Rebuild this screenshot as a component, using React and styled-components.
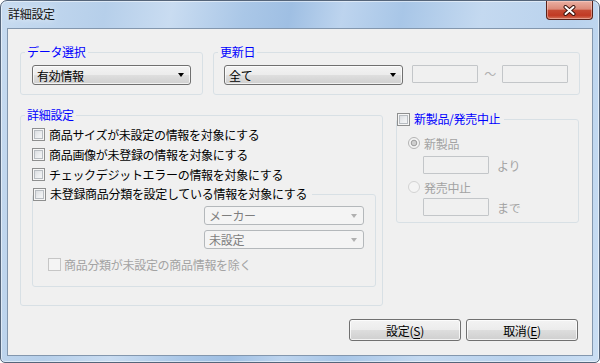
import React from "react";
import styled, { createGlobalStyle } from "styled-components";

// Win7 風「詳細設定」ダイアログ

const GlobalStyle = createGlobalStyle`
  html, body {
    margin: 0;
    padding: 0;
    background: #ffffff;
  }
  body {
    font-family: "Noto Sans CJK JP", "Liberation Sans", sans-serif;
    font-size: 12px;
  }
`;

const Window = styled.div`
  box-sizing: border-box;
  width: 600px;
  height: 363px;
  display: flex;
  flex-direction: column;
  border: 1px solid #55657a;
  border-radius: 7px 7px 5px 5px;
  overflow: hidden;
  background: linear-gradient(
    100deg,
    #c7dbf0 0%,
    #b6cfea 16%,
    #c9dcf1 26%,
    #aac7e7 37%,
    #9fbfe3 44%,
    #bdd4ee 52%,
    #a8c6e7 61%,
    #c4d9f0 73%,
    #b9d2ed 87%,
    #cadef3 100%
  );
  box-shadow: inset 0 0 0 1px rgba(255, 255, 255, 0.5);
`;

const TitleBar = styled.div`
  height: 27px;
  display: flex;
  align-items: flex-start;
  justify-content: space-between;
  padding-left: 7px;
`;

const Title = styled.div`
  line-height: 26px;
  color: #111;
  letter-spacing: -0.3px;
  text-shadow: 0 0 6px rgba(255, 255, 255, 0.9);
`;

const CloseButton = styled.div`
  box-sizing: border-box;
  width: 47px;
  height: 19px;
  margin-right: 6px;
  border: 1px solid #5a2219;
  border-top: none;
  border-radius: 0 0 4px 4px;
  display: flex;
  align-items: center;
  justify-content: center;
  background: linear-gradient(
    180deg,
    #eab0a3 0%,
    #dc8a79 45%,
    #c54a33 52%,
    #c13a24 80%,
    #d3735a 100%
  );
  box-shadow: inset 0 0 0 1px rgba(255, 220, 210, 0.45);
`;

const Client = styled.div`
  flex: 1;
  box-sizing: border-box;
  margin: 0 6px 6px 6px;
  border: 1px solid #8397ae;
  background: #f0f0f0;
  display: flex;
  flex-direction: column;
  padding: 15px 12px 14px 12px;
  letter-spacing: -0.3px;
  color: #000;
`;

const Row = styled.div`
  display: flex;
  align-items: flex-start;
  gap: ${(p) => p.$gap}px;
  margin-top: ${(p) => p.$top || 0}px;
`;

const Group = styled.fieldset`
  box-sizing: border-box;
  width: ${(p) => (p.$w ? `${p.$w}px` : "auto")};
  align-self: ${(p) => (p.$w ? "auto" : "stretch")};
  min-width: 0;
  margin: ${(p) => p.$top || 0}px 0 0 0;
  padding: 0;
  border: 1px solid #d8e0e5;
  border-radius: 3px;
`;

const Legend = styled.legend`
  margin-left: ${(p) => (p.$indent !== undefined ? p.$indent : 4)}px;
  padding: 0 ${(p) => (p.$pr !== undefined ? p.$pr : 2)}px 0 ${(p) => (p.$pl !== undefined ? p.$pl : 2)}px;
  height: ${(p) => p.$h || 16}px;
  line-height: ${(p) => p.$h || 16}px;
  color: ${(p) => p.$color || "#0000ff"};
`;

const LegendInner = styled.span`
  display: flex;
  align-items: center;
  height: 100%;
  gap: ${(p) => p.$gap || 4}px;
`;

const GroupBody = styled.div`
  display: flex;
  flex-direction: ${(p) => (p.$col ? "column" : "row")};
  align-items: flex-start;
  padding: ${(p) => p.$pad};
`;

const Combo = styled.div`
  box-sizing: border-box;
  width: ${(p) => p.$w}px;
  height: ${(p) => p.$h || 20}px;
  display: flex;
  align-items: center;
  justify-content: space-between;
  padding: 0 6px 0 4px;
  border-radius: 3px;
  border: 1px solid ${(p) => (p.$disabled ? "#b4b8bb" : "#707070")};
  color: ${(p) => (p.$disabled ? "#7e7e7e" : "#000")};
  background: ${(p) =>
    p.$disabled
      ? "#f4f4f4"
      : "linear-gradient(180deg, #f3f3f3 0%, #ececec 48%, #dedede 52%, #d0d0d0 100%)"};
  box-shadow: ${(p) => (p.$disabled ? "none" : "inset 0 0 0 1px rgba(255,255,255,0.7)")};
`;

const Arrow = styled.span`
  width: 0;
  height: 0;
  border-left: 3.5px solid transparent;
  border-right: 3.5px solid transparent;
  border-top: 4px solid ${(p) => (p.$disabled ? "#b0b0b0" : "#000")};
`;

const TextBox = styled.div`
  box-sizing: border-box;
  width: 66px;
  height: 18px;
  margin-left: ${(p) => p.$left || 0}px;
  border: 1px solid #c3c6c9;
  border-radius: 1px;
  background: #f0f0f0;
`;

const Tilde = styled.span`
  width: 24px;
  height: 18px;
  line-height: 18px;
  text-align: center;
  color: #b0b0b0;
`;

const CheckRow = styled.div`
  display: flex;
  align-items: center;
  height: 20px;
  gap: ${(p) => (p.$disabled ? 3 : 4)}px;
  margin-top: ${(p) => p.$top || 0}px;
  padding-left: ${(p) => p.$indent || 0}px;
  color: ${(p) => (p.$disabled ? "#a3a3a3" : "#000")};
`;

const Box = styled.span`
  box-sizing: border-box;
  flex: none;
  width: 13px;
  height: 13px;
  border: 1px solid ${(p) => (p.$disabled ? "#c6c6c6" : "#8e8f8f")};
  background: ${(p) =>
    p.$disabled ? "#f4f4f4" : "linear-gradient(135deg, #d3d6da 0%, #eceef0 55%, #fbfbfb 100%)"};
  box-shadow: ${(p) =>
    p.$disabled ? "none" : "inset 0 0 0 1px #f6f6f6, inset 0 0 0 2px #b7bcc1"};
`;

const RadioRow = styled.div`
  display: flex;
  align-items: center;
  height: 18px;
  gap: 4px;
  color: #a3a3a3;
  margin-top: ${(p) => p.$top || 0}px;
`;

const InputRow = styled.div`
  display: flex;
  align-items: center;
  gap: 8px;
  padding-left: 15px;
  color: #a3a3a3;
  margin-top: ${(p) => p.$top || 0}px;
`;

const ComboStack = styled.div`
  align-self: stretch;
  display: flex;
  flex-direction: column;
  align-items: flex-end;
  gap: 5px;
  padding: 2px 11px 0 0;
`;

const ButtonRow = styled.div`
  display: flex;
  justify-content: flex-end;
  gap: 5px;
  margin-top: 13px;
  padding-right: 2px;
`;

const Button = styled.button`
  box-sizing: border-box;
  width: 112px;
  height: 22px;
  padding: 0;
  border: 1px solid #707070;
  border-radius: 3px;
  font: inherit;
  letter-spacing: -0.3px;
  color: #000;
  background: linear-gradient(180deg, #f3f3f3 0%, #ececec 48%, #dddddd 52%, #cfcfcf 100%);
  box-shadow: inset 0 0 0 1px rgba(255, 255, 255, 0.75);
  u {
    text-underline-offset: 2px;
  }
`;

const RadioSvg = styled.svg`
  flex: none;
`;

const CloseGlyph = () => (
  <svg width="13" height="11" viewBox="0 0 13 11">
    <path d="M2.5 2 L10.5 9 M10.5 2 L2.5 9" stroke="#3b140e" strokeWidth="4" strokeLinecap="round" />
    <path d="M2.5 2 L10.5 9 M10.5 2 L2.5 9" stroke="#ffffff" strokeWidth="2" strokeLinecap="round" />
  </svg>
);

const Radio = ({ checked }) => (
  <RadioSvg width="12" height="12" viewBox="0 0 12 12">
    <circle cx="6" cy="6" r="5.5" fill="#f4f4f4" stroke={checked ? "#b3b3b3" : "#d2d2d2"} />
    {checked && <circle cx="6" cy="6" r="2.8" fill="#cfcfcf" stroke="#9c9c9c" strokeWidth="1" />}
  </RadioSvg>
);

const CheckItem = ({ label, disabled, indent, top }) => (
  <CheckRow $disabled={disabled} $indent={indent} $top={top}>
    <Box $disabled={disabled} />
    <span>{label}</span>
  </CheckRow>
);

const App = () => {
  const options = [
    "商品サイズが未設定の情報を対象にする",
    "商品画像が未登録の情報を対象にする",
    "チェックデジットエラーの情報を対象にする",
  ];

  return (
    <>
      <GlobalStyle />
      <Window>
        <TitleBar>
          <Title>詳細設定</Title>
          <CloseButton>
            <CloseGlyph />
          </CloseButton>
        </TitleBar>
        <Client>
          <Row $gap={10}>
            <Group $w={183}>
              <Legend>データ選択</Legend>
              <GroupBody $pad="5px 0 9px 11px">
                <Combo $w={159}>
                  <span>有効情報</span>
                  <Arrow />
                </Combo>
              </GroupBody>
            </Group>
            <Group $w={367}>
              <Legend>更新日</Legend>
              <GroupBody $pad="5px 0 9px 10px">
                <Combo $w={179}>
                  <span>全て</span>
                  <Arrow />
                </Combo>
                <TextBox $left={9} />
                <Tilde>〜</Tilde>
                <TextBox />
              </GroupBody>
            </Group>
          </Row>

          <Row $gap={13} $top={12}>
            <Group $w={363}>
              <Legend>詳細設定</Legend>
              <GroupBody $col $pad="1px 6px 18px 11px">
                {options.map((label) => (
                  <CheckItem key={label} label={label} />
                ))}
                <Group>
                  <Legend $indent={0} $pl={0} $pr={5} $h={20} $color="#000">
                    <LegendInner>
                      <Box />
                      <span>未登録商品分類を設定している情報を対象にする</span>
                    </LegendInner>
                  </Legend>
                  <GroupBody $col $pad="0 0 12px 0">
                    <ComboStack>
                      <Combo $w={160} $h={19} $disabled>
                        <span>メーカー</span>
                        <Arrow $disabled />
                      </Combo>
                      <Combo $w={160} $h={19} $disabled>
                        <span>未設定</span>
                        <Arrow $disabled />
                      </Combo>
                    </ComboStack>
                    <CheckItem label="商品分類が未設定の商品情報を除く" disabled indent={15} top={5} />
                  </GroupBody>
                </Group>
              </GroupBody>
            </Group>

            <Group $w={183} $top={4}>
              <Legend $indent={0} $pl={0} $pr={4}>
                <LegendInner>
                  <Box />
                  <span>新製品/発売中止</span>
                </LegendInner>
              </Legend>
              <GroupBody $col $pad="7px 0 6px 11px">
                <RadioRow>
                  <Radio checked />
                  <span>新製品</span>
                </RadioRow>
                <InputRow $top={4}>
                  <TextBox />
                  <span>より</span>
                </InputRow>
                <RadioRow $top={4}>
                  <Radio />
                  <span>発売中止</span>
                </RadioRow>
                <InputRow $top={2}>
                  <TextBox />
                  <span>まで</span>
                </InputRow>
              </GroupBody>
            </Group>
          </Row>

          <ButtonRow>
            <Button>
              設定(<u>S</u>)
            </Button>
            <Button>
              取消(<u>E</u>)
            </Button>
          </ButtonRow>
        </Client>
      </Window>
    </>
  );
};

export default App;
